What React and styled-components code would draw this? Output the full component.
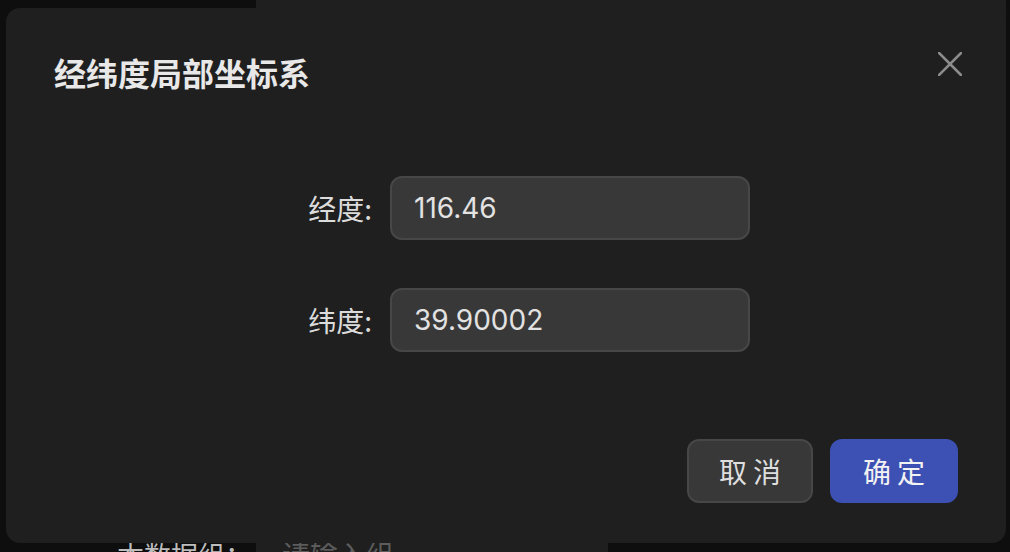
import React from "react";
import styled, { createGlobalStyle } from "styled-components";

const Global = createGlobalStyle`
  html, body { margin: 0; padding: 0; background: #0e0e0e; }
  body { font-family: Inter, "Noto Sans CJK SC", sans-serif; }
  * { box-sizing: border-box; }
`;

const Page = styled.div`
  position: relative;
  width: 1010px;
  height: 552px;
  overflow: hidden;
  background: #0e0e0e;
`;

const TopPanel = styled.div`
  margin-left: 256px;
  width: 750px;
  height: 40px;
  background: #1f1f1f;
`;

const BackRow = styled.div`
  margin-top: 482px;
  display: flex;
  align-items: center;
  height: 64px;
`;

const BackLabel = styled.div`
  width: 256px;
  padding-right: 4px;
  text-align: right;
  font-size: 27px;
  color: #bdbdbd;
  font-family: "Noto Sans CJK SC", sans-serif;
`;

const BackInput = styled.div`
  width: 352px;
  height: 64px;
  background: #1f1f1f;
  display: flex;
  align-items: center;
  padding-left: 26px;
  font-size: 28px;
  color: #5c5c5c;
  font-family: "Noto Sans CJK SC", sans-serif;
`;

const Modal = styled.div`
  position: absolute;
  top: 8px;
  left: 6px;
  width: 1000px;
  height: 535px;
  background: #1f1f1f;
  border-radius: 14px;
  padding: 40px 48px 40px 48px;
  display: flex;
  flex-direction: column;
`;

const Title = styled.h2`
  margin: 0;
  font-size: 32px;
  line-height: 48px;
  font-weight: 700;
  color: #e8e8e8;
  font-family: "Noto Sans CJK SC", sans-serif;
`;

const Close = styled.button`
  position: absolute;
  top: 44px;
  right: 44px;
  width: 24px;
  height: 24px;
  padding: 0;
  border: 0;
  background: transparent;
  cursor: pointer;
  display: flex;
`;

const Form = styled.div`
  margin-top: 80px;
  display: grid;
  grid-template-columns: 318px 360px;
  column-gap: 18px;
  row-gap: 48px;
  align-items: center;
`;

const Label = styled.label`
  text-align: right;
  font-size: 28px;
  color: #dcdcdc;
  font-family: "Noto Sans CJK SC", sans-serif;
`;

const Input = styled.div`
  height: 64px;
  background: #383838;
  border: 2px solid #474747;
  border-radius: 12px;
  padding-left: 22px;
  display: flex;
  align-items: center;
  font-size: 28px;
  color: #e2e2e2;
`;

const Footer = styled.div`
  margin-top: auto;
  display: flex;
  justify-content: flex-end;
  gap: 17px;
`;

const Button = styled.button`
  width: ${(p) => (p.$primary ? 128 : 126)}px;
  height: 64px;
  border-radius: 12px;
  border: 2px solid ${(p) => (p.$primary ? "#3d50b3" : "#474747")};
  background: ${(p) => (p.$primary ? "#3d50b3" : "#383838")};
  color: ${(p) => (p.$primary ? "#f2f2f2" : "#dedede")};
  font-size: 28px;
  font-family: "Noto Sans CJK SC", sans-serif;
  letter-spacing: 6px;
  padding: 0 0 0 6px;
  cursor: pointer;
`;

export default function App() {
  return (
    <>
      <Global />
      <Page>
        <TopPanel />
        <BackRow>
          <BackLabel>本数据组：</BackLabel>
          <BackInput>请输入组</BackInput>
        </BackRow>
        <Modal>
          <Title>经纬度局部坐标系</Title>
          <Close aria-label="close">
            <svg width="24" height="24" viewBox="0 0 24 24">
              <path d="M1 1L23 23M23 1L1 23" stroke="#8c8c8c" strokeWidth="2.6" strokeLinecap="square" />
            </svg>
          </Close>
          <Form>
            <Label>经度:</Label>
            <Input>116.46</Input>
            <Label>纬度:</Label>
            <Input>39.90002</Input>
          </Form>
          <Footer>
            <Button>取消</Button>
            <Button $primary>确定</Button>
          </Footer>
        </Modal>
      </Page>
    </>
  );
}
